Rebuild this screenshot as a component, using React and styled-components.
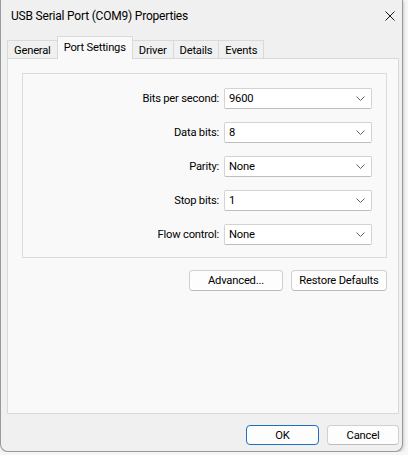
import styled, { createGlobalStyle } from "styled-components";

const GlobalStyle = createGlobalStyle`
  html, body {
    margin: 0;
    padding: 0;
    background: #f6f6f6;
  }
  body {
    font-family: Roboto, "Liberation Sans", sans-serif;
    font-size: 11.2px;
    letter-spacing: -0.2px;
    color: #000;
  }
`;

const FIELDS = [
  { label: "Bits per second:", value: "9600" },
  { label: "Data bits:", value: "8" },
  { label: "Parity:", value: "None" },
  { label: "Stop bits:", value: "1" },
  { label: "Flow control:", value: "None" },
];

const TABS = ["General", "Port Settings", "Driver", "Details", "Events"];

const CloseIcon = () => (
  <svg width="10" height="10" viewBox="0 0 10 10">
    <path d="M0.5 0.5 L9.5 9.5 M9.5 0.5 L0.5 9.5" stroke="#1a1a1a" strokeWidth="1" fill="none" />
  </svg>
);

const Chevron = () => (
  <svg width="9" height="5" viewBox="0 0 9 5">
    <path d="M0.5 0.5 L4.5 4.5 L8.5 0.5" stroke="#606060" strokeWidth="1" fill="none" />
  </svg>
);

const ComboBox = ({ value }) => (
  <Combo>
    <span>{value}</span>
    <Chevron />
  </Combo>
);

export default function App() {
  return (
    <>
      <GlobalStyle />
      <Window>
        <TitleBar>
          <Title>USB Serial Port (COM9) Properties</Title>
          <CloseButton>
            <CloseIcon />
          </CloseButton>
        </TitleBar>
        <Body>
          <TabStrip>
            {TABS.map((tab) => (
              <Tab key={tab} $active={tab === "Port Settings"}>
                {tab}
              </Tab>
            ))}
          </TabStrip>
          <Panel>
            <GroupBox>
              {FIELDS.map((f) => (
                <FieldRow key={f.label}>
                  <Label>{f.label}</Label>
                  <ComboBox value={f.value} />
                </FieldRow>
              ))}
            </GroupBox>
            <PanelButtons>
              <Button $width={94}>Advanced...</Button>
              <Button $width={96}>Restore Defaults</Button>
            </PanelButtons>
          </Panel>
        </Body>
        <Footer>
          <Button $width={73} $height={20} $primary>
            OK
          </Button>
          <Button $width={72} $height={20}>
            Cancel
          </Button>
        </Footer>
      </Window>
    </>
  );
}

const Window = styled.div`
  width: 403px;
  height: 452px;
  box-sizing: border-box;
  background: #f0f0f0;
  border: 1px solid #9a9a9a;
  border-top: none;
  border-radius: 0 0 8px 8px;
  box-shadow: 1px 1px 3px rgba(0, 0, 0, 0.18);
  display: flex;
  flex-direction: column;
`;

const TitleBar = styled.div`
  height: 36px;
  display: flex;
  align-items: flex-start;
  justify-content: space-between;
  padding: 0 0 0 10px;
  box-sizing: border-box;
`;

const Title = styled.div`
  font-size: 12px;
  line-height: 16px;
  margin-top: 8px;
`;

const CloseButton = styled.div`
  width: 46px;
  height: 32px;
  display: flex;
  align-items: center;
  justify-content: center;
  margin-right: -11px;
`;

const Body = styled.div`
  padding: 0 3px 0 6px;
  display: flex;
  flex-direction: column;
`;

const TabStrip = styled.div`
  display: flex;
  align-items: flex-end;
  height: 23px;
  margin-bottom: -1px;
  position: relative;
  z-index: 1;
`;

const Tab = styled.div`
  box-sizing: border-box;
  height: ${(p) => (p.$active ? "23px" : "19px")};
  padding: ${(p) => (p.$active ? "0 6px 2px" : "2px 6px 0")};
  margin-right: -1px;
  border: 1px solid #d9d9d9;
  border-bottom: ${(p) => (p.$active ? "none" : "1px solid #d9d9d9")};
  background: ${(p) => (p.$active ? "#f9f9f9" : "#f0f0f0")};
  display: flex;
  align-items: center;
  white-space: nowrap;
  position: relative;
  z-index: ${(p) => (p.$active ? 2 : 1)};
`;

const Panel = styled.div`
  height: 356px;
  box-sizing: border-box;
  border: 1px solid #d9d9d9;
  background: #f9f9f9;
  padding: 14px 11px 0 14px;
`;

const GroupBox = styled.div`
  border: 1px solid #dcdcdc;
  padding: 14px 14px 12px;
  display: grid;
  grid-template-columns: 1fr 148px;
  row-gap: 13px;
`;

const FieldRow = styled.div`
  display: contents;
`;

const Label = styled.div`
  text-align: right;
  padding-right: 5px;
  align-self: center;
`;

const Combo = styled.div`
  height: 21px;
  box-sizing: border-box;
  background: #ffffff;
  border: 1px solid #d3d3d3;
  border-bottom-color: #bebebe;
  border-radius: 2px;
  display: flex;
  align-items: center;
  justify-content: space-between;
  padding: 0 6px 0 4px;
`;

const PanelButtons = styled.div`
  display: flex;
  justify-content: flex-end;
  gap: 8px;
  margin-top: 12px;
`;

const Button = styled.div`
  width: ${(p) => p.$width}px;
  height: ${(p) => p.$height || 21}px;
  box-sizing: border-box;
  background: #fdfdfd;
  border: 1px solid ${(p) => (p.$primary ? "#1f6fc0" : "#d0d0d0")};
  border-bottom-color: ${(p) => (p.$primary ? "#1f6fc0" : "#bcbcbc")};
  border-radius: 4px;
  display: flex;
  align-items: center;
  justify-content: center;
  white-space: nowrap;
`;

const Footer = styled.div`
  display: flex;
  justify-content: flex-end;
  gap: 8px;
  padding: 11px 3px 0 0;
`;
